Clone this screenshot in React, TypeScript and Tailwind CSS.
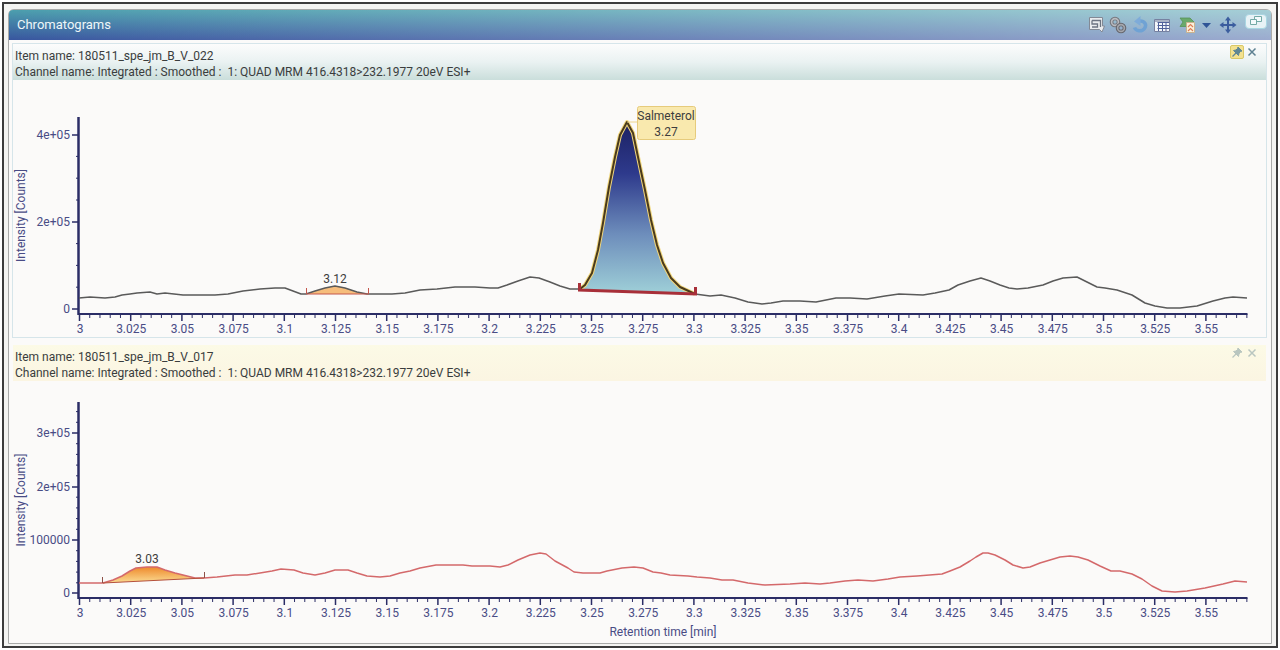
import type { ReactNode } from 'react';

type Point = [number, number];

interface Tick {
  y: number;
  label: string;
}

interface PanelData {
  item: string;
  channel: string;
  active: boolean;
}

const AXIS = '#2b2d66';
const LABEL = '#494c85';
const X0 = 79;
const X_STEP = 10.24; // 0.005 min

const panels: PanelData[] = [
  {
    item: 'Item name: 180511_spe_jm_B_V_022',
    channel: 'Channel name: Integrated : Smoothed :\u00a0 1: QUAD MRM 416.4318>232.1977 20eV ESI+',
    active: true,
  },
  {
    item: 'Item name: 180511_spe_jm_B_V_017',
    channel: 'Channel name: Integrated : Smoothed :\u00a0 1: QUAD MRM 416.4318>232.1977 20eV ESI+',
    active: false,
  },
];

const minorPeak022: Point[] = [
  [306, 294], [315, 291], [325, 288], [335, 286], [345, 288], [357, 292], [367, 294],
];

const mainPeak: Point[] = [
  [580, 289], [585, 285], [592, 273], [598, 250], [603, 223], [609, 187], [615, 157], [620, 135], [627, 122],
  [633, 133], [638, 157], [645, 190], [651, 220], [657, 245], [663, 263], [671, 278], [680, 287], [695, 294],
];

const trace022: Point[] = [
  [79, 298], [90, 297], [105, 298], [115, 297], [122, 295], [130, 294], [137, 293], [150, 292], [157, 294],
  [165, 293], [183, 295], [215, 295], [228, 294], [243, 291], [260, 289], [275, 288], [285, 288], [293, 291],
  [301, 294], ...minorPeak022, [392, 294], [405, 293], [420, 290], [437, 289], [455, 287], [475, 287],
  [490, 288], [498, 288], [507, 285], [518, 281], [530, 277], [539, 278], [550, 282], [560, 286], [570, 289],
  ...mainPeak, [710, 296], [721, 295], [735, 298], [748, 302], [762, 304], [771, 303], [783, 301],
  [800, 301], [816, 302], [836, 298], [850, 298], [867, 299], [885, 296], [899, 294], [923, 295], [935, 293],
  [949, 290], [958, 285], [970, 281], [981, 278], [990, 281], [1000, 285], [1009, 288], [1017, 289],
  [1028, 288], [1043, 285], [1053, 281], [1063, 278], [1077, 277], [1087, 282], [1097, 287], [1105, 288],
  [1117, 290], [1132, 295], [1145, 303], [1155, 306], [1167, 308], [1180, 308], [1197, 306], [1213, 301],
  [1225, 298], [1233, 297], [1247, 298],
];

const minorPeak017: Point[] = [
  [103, 583], [113, 580], [122, 576], [130, 571], [136, 568], [147, 567], [157, 567], [165, 570], [175, 573],
  [187, 576], [195, 578], [204, 578],
];

const trace017: Point[] = [
  [79, 583], ...minorPeak017, [217, 577], [235, 575], [247, 575], [260, 573], [272, 571], [281, 569],
  [294, 570], [303, 573], [315, 575], [325, 573], [335, 570], [348, 570], [357, 573], [367, 576], [380, 577],
  [390, 576], [400, 573], [410, 571], [420, 568], [436, 565], [463, 565], [472, 566], [490, 566], [500, 567],
  [508, 565], [518, 560], [530, 555], [540, 553], [546, 554], [555, 561], [568, 568], [574, 572], [583, 573],
  [600, 573], [607, 571], [622, 568], [634, 567], [643, 568], [653, 572], [661, 573], [670, 575], [688, 576],
  [697, 577], [710, 578], [722, 580], [733, 580], [748, 583], [765, 585], [790, 584], [805, 583], [820, 584],
  [830, 583], [845, 581], [858, 580], [873, 581], [888, 579], [900, 577], [917, 576], [942, 574], [950, 571],
  [960, 567], [970, 561], [976, 557], [983, 553], [988, 553], [995, 555], [1005, 560], [1013, 565],
  [1023, 568], [1030, 567], [1040, 563], [1050, 560], [1060, 557], [1070, 556], [1078, 557], [1088, 560],
  [1100, 566], [1111, 571], [1120, 571], [1132, 574], [1142, 579], [1152, 586], [1162, 591], [1175, 592],
  [1187, 591], [1205, 588], [1223, 584], [1235, 581], [1247, 582],
];

const toPoints = (points: Point[]) => points.map(([x, y]) => `${x},${y}`).join(' ');

function Axes({ top, bottom, ticks, minor }: { top: number; bottom: number; ticks: Tick[]; minor: number[] }) {
  return (
    <g stroke={AXIS} fill="none">
      <path strokeWidth={2.5} d={`M78.5 ${top}V${bottom + 1}`} />
      <path strokeWidth={2} d={`M78 ${bottom}H1247.5`} />
      {ticks.map((t) => (
        <path key={t.label} strokeWidth={1.5} d={`M72 ${t.y}H78`} />
      ))}
      {minor.map((y) => (
        <path key={y} strokeWidth={1} d={`M76 ${y}H78`} />
      ))}
      {Array.from({ length: 115 }, (_, i) => (
        <path
          key={i}
          strokeWidth={i % 5 === 0 ? 1.5 : 1}
          d={`M${X0 + 0.5 + i * X_STEP} ${bottom}v${i % 5 === 0 ? 7 : 4}`}
        />
      ))}
      <g stroke="none" fill={LABEL} fontSize={12}>
        {ticks.map((t) => (
          <text key={t.label} x={70} y={t.y + 4} textAnchor="end">
            {t.label}
          </text>
        ))}
        {Array.from({ length: 23 }, (_, i) => (
          <text key={i} x={X0 + 1 + i * X_STEP * 5} y={bottom + 19} textAnchor="middle">
            {String(Number((3 + i * 0.025).toFixed(3)))}
          </text>
        ))}
        <text transform={`translate(25 ${(top + bottom) / 2}) rotate(-90)`} textAnchor="middle">
          Intensity [Counts]
        </text>
      </g>
    </g>
  );
}

function PeakLabel({ x, y, children }: { x: number; y: number; children: string }) {
  return (
    <text x={x} y={y} fill="#3d3d3d" fontSize={12} textAnchor="middle">
      {children}
    </text>
  );
}

function Chart022() {
  const minor = [0.5, 1, 1.5, 2.5, 3, 3.5].map((v) => 309 - v * 43.6);
  return (
    <svg viewBox="13 80 1253 257" className="block w-full" role="img" aria-label="Chromatogram 180511_spe_jm_B_V_022">
      <defs>
        <linearGradient id="mainFill" x1="0" y1="0" x2="0" y2="1">
          <stop offset="0" stopColor="#1c2163" />
          <stop offset="0.3" stopColor="#2e3a8c" />
          <stop offset="0.65" stopColor="#6d8dbb" />
          <stop offset="1" stopColor="#9fd0d8" />
        </linearGradient>
      </defs>
      <Axes
        top={117}
        bottom={314}
        ticks={[
          { y: 135, label: '4e+05' },
          { y: 222, label: '2e+05' },
          { y: 309, label: '0' },
        ]}
        minor={minor}
      />
      <polygon points={toPoints(minorPeak022)} fill="#f6bd7c" />
      <polyline points={toPoints(trace022)} fill="none" stroke="#5a5a5a" strokeWidth={1.5} strokeLinejoin="round" />
      <path d="M306.500 288V294H368.500V288" fill="none" stroke="#c4564c" />
      <polygon points={toPoints(mainPeak)} fill="url(#mainFill)" />
      <polyline points={toPoints(mainPeak)} fill="none" stroke="#f0d67c" strokeWidth={4} strokeLinejoin="round" />
      <polyline points={toPoints(mainPeak)} fill="none" stroke="#4a3a1c" strokeWidth={2} strokeLinejoin="round" />
      <path d="M579.500 283V290L695.500 294V287" fill="none" stroke="#a82f39" strokeWidth={3} />
      <path d="M627 122H637" stroke="#eed68c" />
      <rect x="637.500" y="106.500" width="58" height="33" rx="2" fill="#f9e9ae" stroke="#e6cb7c" />
      <PeakLabel x={666} y={120}>Salmeterol</PeakLabel>
      <PeakLabel x={666} y={136}>3.27</PeakLabel>
      <PeakLabel x={335} y={283}>3.12</PeakLabel>
    </svg>
  );
}

function Chart017() {
  const minor = Array.from({ length: 17 }, (_, i) => i + 1)
    .filter((i) => i % 5 !== 0)
    .map((i) => 593.5 - i * 10.7);
  return (
    <svg viewBox="13 381 1253 258" className="block w-full" role="img" aria-label="Chromatogram 180511_spe_jm_B_V_017">
      <defs>
        <linearGradient id="minorFill" x1="0" y1="0" x2="0" y2="1">
          <stop offset="0" stopColor="#ee8a2c" />
          <stop offset="1" stopColor="#fbdc94" />
        </linearGradient>
      </defs>
      <Axes
        top={402}
        bottom={598}
        ticks={[
          { y: 433, label: '3e+05' },
          { y: 487, label: '2e+05' },
          { y: 540, label: '100000' },
          { y: 593, label: '0' },
        ]}
        minor={minor}
      />
      <polygon points={toPoints(minorPeak017)} fill="url(#minorFill)" />
      <polyline points={toPoints(trace017)} fill="none" stroke="#d4696b" strokeWidth={1.5} strokeLinejoin="round" />
      <path d="M103 583L204 578" stroke="#b5503c" />
      <path d="M102.500 577V583M204.500 572V578" stroke="#8d5148" />
      <PeakLabel x={147} y={563}>3.03</PeakLabel>
      <text x={663} y={636} fill={LABEL} fontSize={12} textAnchor="middle">
        Retention time [min]
      </text>
    </svg>
  );
}

function ToolButton({ label, children }: { label: string; children: ReactNode }) {
  return (
    <button type="button" aria-label={label} className="block">
      {children}
    </button>
  );
}

function Toolbar() {
  return (
    <div className="flex items-center pr-1">
      <div className="flex items-center gap-1">
        <ToolButton label="Annotate">
          <svg width="18" height="18" viewBox="0 0 18 18">
            <path d="M2.500 1.500H15.500V10H17.500L15 16 12.500 13.500H2.500Z" fill="#e9ebee" stroke="#828995" />
            <path d="M5 4.500H13.500V11M5 4.500V8H10.500V11H5" fill="none" stroke="#6c7482" strokeWidth="1.300" />
          </svg>
        </ToolButton>
        <ToolButton label="Processing">
          <svg width="18" height="18" viewBox="0 0 18 18" fill="none">
            <circle cx="6" cy="6" r="3.500" stroke="#75767c" strokeWidth="3.600" />
            <circle cx="6" cy="6" r="3.400" stroke="#b9babf" strokeWidth="1.600" />
            <circle cx="12" cy="12" r="3.500" stroke="#66676e" strokeWidth="3.600" />
            <circle cx="12" cy="12" r="3.400" stroke="#a4a6ac" strokeWidth="1.600" />
          </svg>
        </ToolButton>
        <ToolButton label="Undo">
          <svg width="18" height="18" viewBox="0 0 18 18" fill="none">
            <path d="M8 5C14 4.500 16 9 13.500 12.500 11 16 5 15.500 3.500 11.500" stroke="#6fa2d4" strokeWidth="3.500" />
            <path d="M3 5.500L9.500 0V10Z" fill="#7eabd9" />
          </svg>
        </ToolButton>
        <ToolButton label="Table">
          <svg width="18" height="18" viewBox="0 0 18 18">
            <path d="M1.500 3.500H16.500V15.500H1.500Z" fill="#f3f6fa" stroke="#7681a0" />
            <path d="M2 4H16V6H2Z" fill="#a9b2c6" />
            <path d="M5.500 6V15M9.500 6V15M13 6V15M4.500 6.500H16M4.500 9.500H16M4.500 12.500H16" stroke="#50619a" />
          </svg>
        </ToolButton>
      </div>
      <div className="ml-2 flex items-center gap-1">
        <ToolButton label="Export">
          <svg width="18" height="18" viewBox="0 0 18 18">
            <path d="M1 2H11L15 6 11 10.500H1L4 6Z" fill="#6aa96c" stroke="#559358" strokeWidth=".8" />
            <path d="M7.500 6.500H15.500V16.500H7.500Z" fill="#fbf1dc" stroke="#c9b390" />
            <path d="M9 11L11.500 8.500 14 11M9 15L11.500 12.500 14 15" fill="none" stroke="#dd7f58" strokeWidth="1.200" />
          </svg>
        </ToolButton>
        <ToolButton label="Export options">
          <svg width="10" height="18" viewBox="0 0 10 18">
            <path d="M1 7H10L5.500 12Z" fill="#2f5497" />
          </svg>
        </ToolButton>
      </div>
      <div className="ml-2">
        <ToolButton label="Move">
          <svg width="18" height="18" viewBox="0 0 18 18">
            <path d="M9 3V15M3 9H15" stroke="#3b5d9e" strokeWidth="2" />
            <path d="M9 .5L12 4.500H6ZM9 17.500L12 13.500H6ZM.5 9L4.500 6V12ZM17.500 9L13.500 6V12Z" fill="#3b5d9e" />
          </svg>
        </ToolButton>
      </div>
      <button
        type="button"
        aria-label="Restore window"
        className="mb-2 ml-2 flex h-[15px] w-[22px] items-center justify-center rounded-sm border border-[#a9d6e2] bg-[#e8f2f6]"
      >
        <svg width="14" height="12" viewBox="0 0 14 12">
          <path d="M5.500 1.500H12.500V6.500H5.500Z" fill="#f4fafc" stroke="#74aaa6" />
          <path d="M1.500 4.500H7.500V9.500H1.500Z" fill="#f4fafc" stroke="#74aaa6" />
        </svg>
      </button>
    </div>
  );
}

function PanelHeader({ panel }: { panel: PanelData }) {
  return (
    <div
      className={`flex items-start justify-between pr-2 pl-[2px] ${
        panel.active
          ? 'bg-linear-to-b from-[#fcfcfc] via-[#eaf2f2] to-[#cadedb]'
          : 'bg-linear-to-b from-[#fcfae6] to-[#fbf5e2]'
      }`}
    >
      <div className="pt-1 text-[12px] leading-4 text-[#3a3d3d]">
        <h2>{panel.item}</h2>
        <p className="whitespace-nowrap">{panel.channel}</p>
      </div>
      <div className="flex items-center gap-[2px] pt-[1px]">
        <button
          type="button"
          aria-label="Pin"
          className={`flex size-[14px] items-center justify-center rounded-xs border ${
            panel.active ? 'border-[#d9c866] bg-[#f3e190] text-[#5f8693]' : 'border-transparent text-[#b9c6bf]'
          }`}
        >
          <svg width="12" height="12" viewBox="0 0 12 12">
            <path
              d="M7 1L11 5 9.500 5.500 8 7 7.500 9.500 5 7 2.500 4.500 5 4 6.500 2.500Z"
              fill="currentColor"
              stroke="currentColor"
            />
            <path d="M5 7L1.500 10.500" stroke="currentColor" strokeWidth="1.300" />
          </svg>
        </button>
        <button type="button" aria-label="Close" className={panel.active ? 'text-[#5d8091]' : 'text-[#b9c6c0]'}>
          <svg width="12" height="12" viewBox="0 0 12 12">
            <path d="M2.500 2.500L9.500 9.500M9.500 2.500L2.500 9.500" stroke="currentColor" strokeWidth="1.500" />
          </svg>
        </button>
      </div>
    </div>
  );
}

export default function App() {
  return (
    <div className="min-h-screen bg-white p-[2px] font-['Roboto','Open_Sans',sans-serif]">
      <div className="border-2 border-[#3c3c3c] bg-[#f4f4f2] pt-[5px] pr-1 pb-[2px] pl-1">
        <main className="rounded-t-md border border-[#a9aaa9] bg-[#fbfaf9]">
          <header className="flex h-[30px] items-center justify-between rounded-t-sm bg-[linear-gradient(to_right,transparent,rgba(255,255,255,0.5)),linear-gradient(to_bottom,#4c9fae,#38569f)] pl-2">
            <h1 className="text-[13px] text-[#eef6f8]">Chromatograms</h1>
            <Toolbar />
          </header>
          <div className="flex flex-col gap-[7px] pt-[3px] pr-1 pb-1 pl-[3px]">
            <section className="border border-[#d6e5ea]">
              <PanelHeader panel={panels[0]} />
              <Chart022 />
            </section>
            <section className="border-x border-transparent">
              <PanelHeader panel={panels[1]} />
              <Chart017 />
            </section>
          </div>
        </main>
      </div>
    </div>
  );
}
